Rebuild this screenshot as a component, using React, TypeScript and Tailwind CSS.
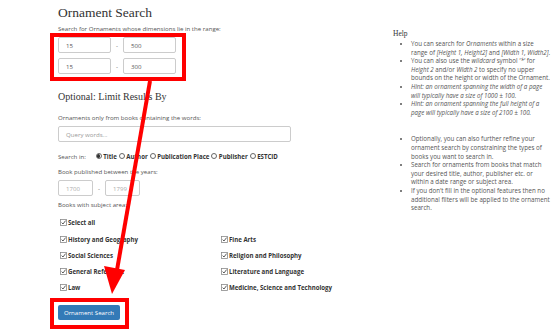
import React from 'react';

const LEFT_AREAS = ['History and Geography', 'Social Sciences', 'General Reference', 'Law'];
const RIGHT_AREAS = ['Fine Arts', 'Religion and Philosophy', 'Literature and Language', 'Medicine, Science and Technology'];

function Check({ label }: { label: string }) {
  return (
    <div className="flex items-center h-[8px]">
      <svg width="7" height="7" viewBox="0 0 7 7" className="mr-[1px] ml-[2px] shrink-0">
        <rect x="0.5" y="0.5" width="6" height="6" fill="#fff" stroke="#8a8a8a" strokeWidth="0.8" />
        <path d="M1.6 3.6 L3 5 L5.6 1.6" fill="none" stroke="#333" strokeWidth="0.8" />
      </svg>
      <span className="font-bold text-[#333] whitespace-nowrap">{label}</span>
    </div>
  );
}

function Radio({ label, checked }: { label: string; checked?: boolean }) {
  return (
    <span className="inline-flex items-center mr-[2px]">
      <span className="w-[6px] h-[6px] rounded-full border-[0.8px] border-[#666] bg-white flex items-center justify-center mr-[1.5px]">
        {checked && <span className="w-[3.2px] h-[3.2px] rounded-full bg-[#333]" />}
      </span>
      <span className="font-bold text-[#333]">{label}</span>
    </span>
  );
}

function Box({ value, w, muted }: { value: string; w: string; muted?: boolean }) {
  return (
    <div className={`${w} h-[16px] border-[0.8px] border-[#ccc] rounded-[2px] flex items-center pl-[7px] ${muted ? 'text-[#aaa]' : 'text-[#555]'}`}>
      {value}
    </div>
  );
}

export default function App() {
  return (
    <div
      className="relative w-[560px] h-[336px] overflow-hidden bg-white text-[6.1px] leading-[9px] text-[#555]"
      style={{ fontFamily: '"Open Sans", "Liberation Sans", sans-serif' }}
    >
      <div className="flex">
        <div className="pl-[58px] pt-[5px] w-[335px]">
          <h2 className="text-[13.5px] leading-[16px] text-[#333]" style={{ fontFamily: '"Liberation Serif", serif' }}>
            Ornament Search
          </h2>
          <p className="mt-[2.5px]">Search for Ornaments whose dimensions lie in the range:</p>
          <div className="mt-[4.5px] flex flex-col gap-[5px] w-[118px]">
            <div className="flex items-center justify-between">
              <Box value="15" w="w-[53px]" />
              <span>-</span>
              <Box value="500" w="w-[53px]" />
            </div>
            <div className="flex items-center justify-between">
              <Box value="15" w="w-[53px]" />
              <span>-</span>
              <Box value="300" w="w-[53px]" />
            </div>
          </div>

          <h3 className="mt-[17px] text-[10px] leading-[12px] text-[#333]" style={{ fontFamily: '"Liberation Serif", serif' }}>
            Optional: Limit Results By
          </h3>
          <p className="mt-[9.5px]">Ornaments only from books containing the words:</p>
          <div className="mt-[4.5px] w-[233px] h-[16px] border-[0.8px] border-[#ccc] rounded-[2px] flex items-center pl-[7px] text-[#999]">
            Query words...
          </div>
          <div className="mt-[9.5px] flex items-center h-[9px]">
            <span className="mr-[10px]">Search in:</span>
            <Radio label="Title" checked />
            <Radio label="Author" />
            <Radio label="Publication Place" />
            <Radio label="Publisher" />
            <Radio label="ESTCID" />
          </div>
          <p className="mt-[6px]">Book published between the years:</p>
          <div className="mt-[4.5px] flex items-center gap-[5px]">
            <Box value="1700" w="w-[35px]" muted />
            <span>-</span>
            <Box value="1799" w="w-[35px]" muted />
          </div>
          <p className="mt-[3.5px]">Books with subject area:</p>
          <div className="mt-[9.5px]">
            <Check label="Select all" />
          </div>
          <div className="mt-[9px] grid grid-cols-[161px_1fr] gap-y-[8.3px]">
            {LEFT_AREAS.map((l, i) => (
              <React.Fragment key={l}>
                <Check label={l} />
                <Check label={RIGHT_AREAS[i]} />
              </React.Fragment>
            ))}
          </div>
          <button className="mt-[13px] w-[62px] h-[15px] rounded-[2px] bg-[#337ab7] text-white flex items-center justify-center">
            Ornament Search
          </button>
        </div>

        <div className="ml-[58px] pt-[29px] w-[167px]">
          <h4 className="text-[7.5px] leading-[10px] text-[#333]" style={{ fontFamily: '"Liberation Serif", serif' }}>
            Help
          </h4>
          <ul className="mt-[1px] list-disc pl-[18px] whitespace-nowrap text-[6.2px] leading-[8.6px]">
            <li>
              You can search for <i>Ornaments</i> within a size<br />
              range of <i>[Height 1, Height2]</i> and <i>[Width 1, Width2]</i>.
            </li>
            <li>
              You can also use the <i>wildcard</i> symbol <i>'*'</i> for<br />
              <i>Height 2</i> and/or <i>Width 2</i> to specify no upper<br />
              bounds on the height or width of the Ornament.
            </li>
            <li>
              <i>Hint: an ornament spanning the width of a page<br />will typically have a size of 1000 ± 100.</i>
            </li>
            <li>
              <i>Hint: an ornament spanning the full height of a<br />page will typically have a size of 2100 ± 100.</i>
            </li>
          </ul>
          <ul className="mt-[18px] list-disc pl-[18px] whitespace-nowrap text-[6.2px] leading-[8.6px]">
            <li>
              Optionally, you can also further refine your<br />
              ornament search by constraining the types of<br />
              books you want to search in.
            </li>
            <li>
              Search for ornaments from books that match<br />
              your desired title, author, publisher etc. or<br />
              within a date range or subject area.
            </li>
            <li>
              If you don't fill in the optional features then no<br />
              additional filters will be applied to the ornament<br />
              search.
            </li>
          </ul>
        </div>
      </div>

      <svg className="absolute inset-0 pointer-events-none" width="560" height="336" viewBox="0 0 560 336">
        <rect x="52" y="35" width="132" height="44" fill="none" stroke="#ff0000" strokeWidth="4" />
        <rect x="52" y="300" width="75" height="27" fill="none" stroke="#ff0000" strokeWidth="4" />
        <line x1="150" y1="81" x2="117" y2="270" stroke="#ff0000" strokeWidth="4" />
        <polygon points="104,266 125,270 112,294" fill="#ff0000" />
      </svg>
    </div>
  );
}
